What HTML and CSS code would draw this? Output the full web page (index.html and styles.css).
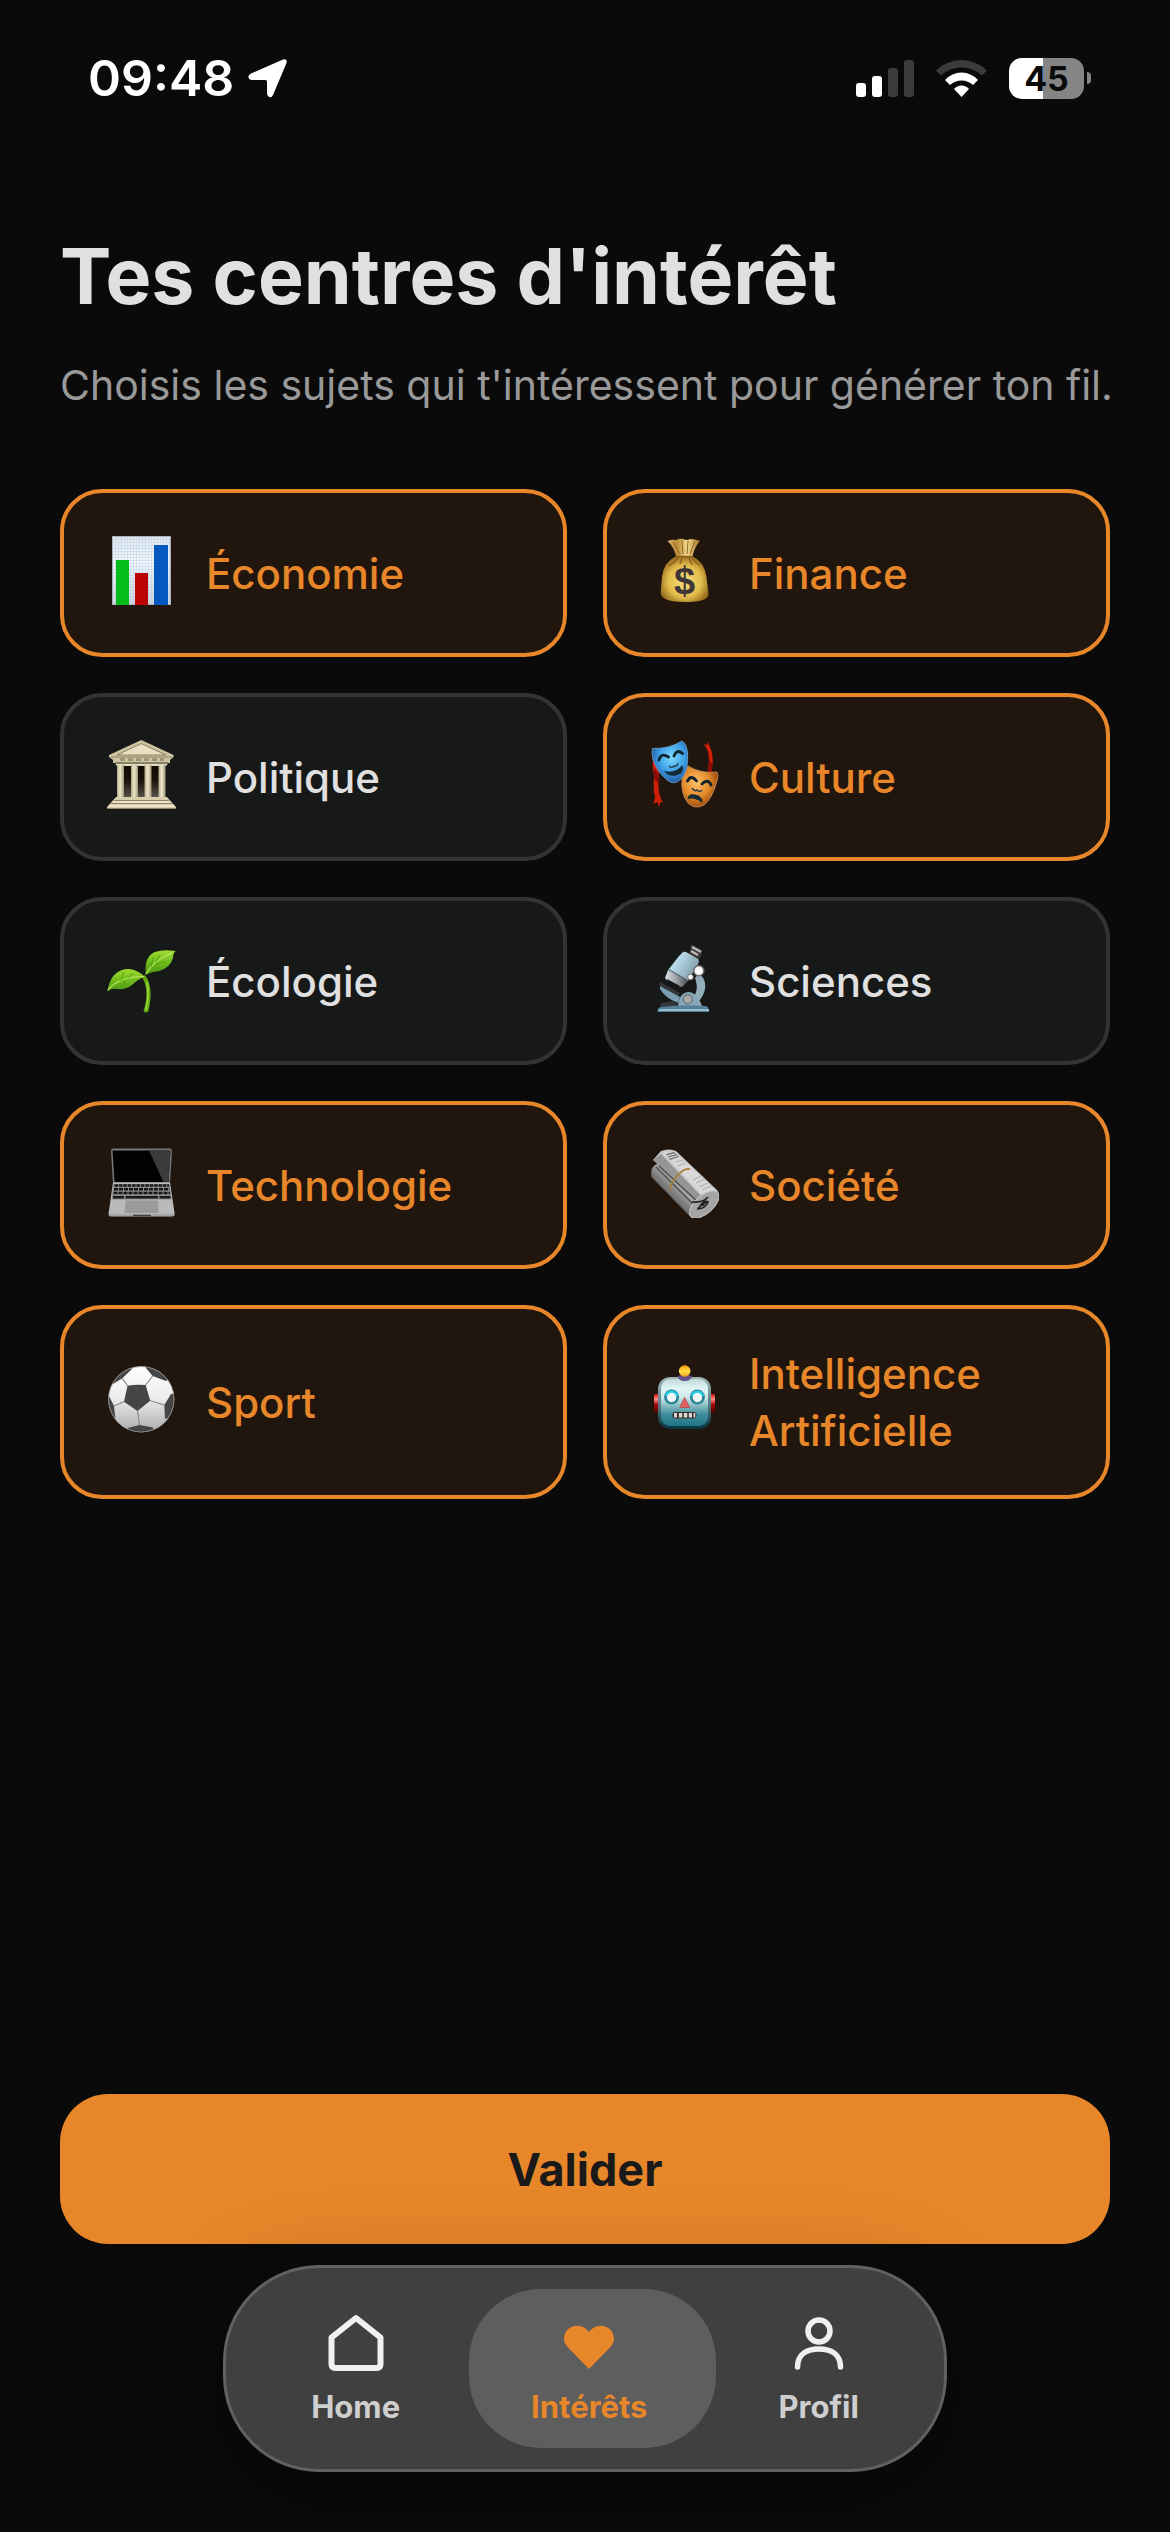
FILE: index.html
```html
<!DOCTYPE html>
<html lang="fr">
<head>
    <meta charset="UTF-8">
    <meta name="viewport" content="width=device-width, initial-scale=1.0">
    <title>Tes centres d'intérêt</title>
    <link rel="stylesheet" href="styles.css">
</head>
<body>
    <div class="status-bar">
        <div class="status-left">
            <span class="time">09:48</span>
            <svg class="location" viewBox="0 0 40 40" aria-hidden="true">
                <path d="M35 1.500Q39.500 0 38.500 5L25 37Q23 41 20 38Q19 37 19 35V23.500Q19 22 17.500 22H4Q0 21.500 .5 18Q1 16.500 3 15.500Z" fill="#fff"/>
            </svg>
        </div>
        <div class="status-right">
            <svg class="signal" viewBox="0 0 58 37" aria-hidden="true">
                <rect x="0" y="23" width="10" height="14" rx="3" fill="#fff"/>
                <rect x="16" y="16" width="10" height="21" rx="3" fill="#fff"/>
                <rect x="32" y="8" width="10" height="29" rx="3" fill="#3b3b3b"/>
                <rect x="48" y="0" width="10" height="37" rx="3" fill="#3b3b3b"/>
            </svg>
            <svg class="wifi" viewBox="0 0 51 37" aria-hidden="true">
                <path d="M0 10.500Q11 0 25.500 0T51 10.500L46 15.500Q37 7.500 25.500 7.500T5 15.500Z" fill="#3b3b3b"/>
                <path d="M9 20Q16 12.500 25.500 12.500T42 20L37 25Q32 20.500 25.500 20.500T14 25Z" fill="#fff"/>
                <path d="M18 29Q21 25.500 25.500 25.500T33 29L25.500 37Z" fill="#fff"/>
            </svg>
            <div class="battery">
                <span class="battery-level">45</span>
                <span class="battery-tip"></span>
            </div>
        </div>
    </div>

    <main class="content">
        <h1>Tes centres d'intérêt</h1>
        <p class="subtitle">Choisis les sujets qui t'intéressent pour générer ton fil.</p>

        <div class="grid">
            <button type="button" class="card selected" aria-pressed="true">
                <svg class="emoji" viewBox="0 0 70 70" aria-hidden="true">
                    <defs>
                        <pattern id="squares" width="3" height="3" patternUnits="userSpaceOnUse">
                            <path d="M3 0H0V3" fill="none" stroke="#a9cdec" stroke-width=".8"/>
                        </pattern>
                        <linearGradient id="paper" x1="0" y1="0" x2="0" y2="1">
                            <stop offset="0" stop-color="#e4e8ee"/><stop offset=".4" stop-color="#f6f7f9"/><stop offset="1" stop-color="#cfd3da"/>
                        </linearGradient>
                    </defs>
                    <rect x="6" width="59" height="69" fill="url(#paper)"/>
                    <rect x="6" width="59" height="69" fill="url(#squares)"/>
                    <rect x="6.500" y=".5" width="58" height="68" fill="none" stroke="#aab0b8"/>
                    <rect x="10" y="24" width="13" height="45" fill="#06bb1c"/>
                    <rect x="29" y="37" width="13" height="32" fill="#bb0505"/>
                    <rect x="48" y="9" width="14" height="60" fill="#0558bd"/>
                </svg>
                <span>Économie</span>
            </button>

            <button type="button" class="card selected" aria-pressed="true">
                <svg class="emoji" viewBox="0 0 70 70" aria-hidden="true">
                    <defs>
                        <radialGradient id="bag" cx=".5" cy=".55" r=".58">
                            <stop offset="0" stop-color="#f7df7c"/><stop offset=".6" stop-color="#e2bd4c"/><stop offset="1" stop-color="#8c6117"/>
                        </radialGradient>
                        <linearGradient id="neck" x1="0" y1="0" x2="1" y2="0">
                            <stop offset="0" stop-color="#d8b070"/><stop offset=".3" stop-color="#b98a35"/><stop offset=".6" stop-color="#f3dc8c"/><stop offset="1" stop-color="#a8722a"/>
                        </linearGradient>
                    </defs>
                    <path d="M18.500 5Q23 3 27 4Q31 2 34 3Q38 5 41 3Q46 3 51 5Q46 10 43.500 20H27Q25 11 18.500 5Z" fill="url(#neck)"/>
                    <path d="M27 20Q14 27 13 41L11.600 57Q12 66 36 66T59.500 58L57.500 41Q56 27 43.500 20Z" fill="url(#bag)"/>
                    <path d="M27 20.500H44M29 22Q25 27 20 30M33 22L31 28M40 22L43 29M43 22Q47 27 51 29" fill="none" stroke="#8a5f1c" stroke-width="1.300"/>
                    <path d="M24 6L31 18M33 4L34 18M39 5L38 18M46 5L41 18" fill="none" stroke="#8f6428" stroke-width="1"/>
                    <text class="dollar" x="35.500" y="58" text-anchor="middle">$</text>
                </svg>
                <span>Finance</span>
            </button>

            <button type="button" class="card" aria-pressed="false">
                <svg class="emoji" viewBox="0 0 70 70" aria-hidden="true">
                    <defs>
                        <linearGradient id="column" x1="0" y1="0" x2="1" y2="0">
                            <stop offset="0" stop-color="#b3a888"/><stop offset=".45" stop-color="#efe8ca"/><stop offset="1" stop-color="#a3977a"/>
                        </linearGradient>
                        <linearGradient id="inside" x1="0" y1="0" x2="0" y2="1">
                            <stop offset="0" stop-color="#0d0800"/><stop offset=".5" stop-color="#1c150b"/><stop offset="1" stop-color="#5a554d"/>
                        </linearGradient>
                    </defs>
                    <rect x="14" y="24" width="42" height="34" fill="url(#inside)"/>
                    <path d="M35.300 0L67.600 15V17L64 20V23H7V20L3 17V15Z" fill="#cfc4a1"/>
                    <path d="M35.300 3.500L60 15H11Z" fill="#e9e1c2" stroke="#8b8064"/>
                    <path d="M5 17H66M9 22.500H62" stroke="#8f8468"/>
                    <path d="M14 19.500H58" stroke="#a29573" stroke-width="3" stroke-dasharray="5 3"/>
                    <path d="M9 23.500H62L60 26H11Z" fill="#e6dec0"/>
                    <rect x="11" y="25" width="7" height="33" fill="url(#column)"/>
                    <rect x="25" y="25" width="7" height="33" fill="url(#column)"/>
                    <rect x="38.500" y="25" width="7" height="33" fill="url(#column)"/>
                    <rect x="52.500" y="25" width="7" height="33" fill="url(#column)"/>
                    <path d="M10 57H61L70 67V69H1V67Z" fill="#d8ceac"/>
                    <path d="M8 60.500H63M5 63.500H66M1 68.500H70" stroke="#8f8567"/>
                    <path d="M7 62H64M3 66H68" stroke="#f1ebd0" stroke-width="1.500"/>
                </svg>
                <span>Politique</span>
            </button>

            <button type="button" class="card selected" aria-pressed="true">
                <svg class="emoji" viewBox="0 0 70 70" aria-hidden="true">
                    <defs>
                        <radialGradient id="happy" cx=".55" cy=".4" r=".65">
                            <stop offset="0" stop-color="#7fdcff"/><stop offset=".55" stop-color="#3d9fe6"/><stop offset="1" stop-color="#204a94"/>
                        </radialGradient>
                        <radialGradient id="sad" cx=".4" cy=".4" r=".65">
                            <stop offset="0" stop-color="#ffc36a"/><stop offset=".55" stop-color="#e38a2b"/><stop offset="1" stop-color="#96420c"/>
                        </radialGradient>
                    </defs>
                    <path d="M4 20Q3 27 5 35Q4 50 6 57L4.500 64L8 62L10.500 67L11 62L14 63Q9 54 9.500 44L10 30Z" fill="#cf1f06"/>
                    <path d="M55 4L58 5L58 1.500Q65 12 63.500 24L62.500 33H58.500Q61 20 59 11Z" fill="#cf1f06"/>
                    <path d="M60 20Q59.500 27 59 33H62.500L63.500 24ZM5 28L9.500 34L9.300 44L5 38Z" fill="#8c0904"/>
                    <path d="M39 26Q52 34 68 32Q70 35 68 41Q63 59 55 65Q46 70 39 63Q31 53 33.300 37Q36 32 39 26Z" fill="url(#sad)" stroke="#c9955e" stroke-width=".8"/>
                    <path d="M3.500 8.500Q20 9 33 1Q37 3 38.500 12Q40 31 32 39Q25 46 18 40Q4 28 3 13Z" fill="url(#happy)" stroke="#6aa9d7" stroke-width=".8"/>
                    <g fill="none" stroke="#10242e" stroke-width="2.800" stroke-linecap="round">
                        <path d="M10 20Q12 12 19.500 17M25 16Q28 8.500 33.500 13.500M38.500 41Q42 34 47.500 41M53 44Q59 38 62 45"/>
                    </g>
                    <path d="M15 31Q26 34 33.500 25Q36 34 27 35.500Q19 37 15 31Z" fill="#142a35"/>
                    <path d="M20 26Q23 29 25 26Q28 27 29 23M43 48Q46 52 48 50Q51 53 53 50" fill="none" stroke="#2a3a45" stroke-width="1.400"/>
                    <path d="M38.500 59Q39 53 46 54.500Q54 56 53.500 63Q46 57 38.500 59Z" fill="#142a35"/>
                </svg>
                <span>Culture</span>
            </button>

            <button type="button" class="card" aria-pressed="false">
                <svg class="emoji" viewBox="0 0 70 70" aria-hidden="true">
                    <defs>
                        <linearGradient id="leaf" x1="0" y1="0" x2="0" y2="1">
                            <stop offset="0" stop-color="#a0dc32"/><stop offset=".5" stop-color="#6fbc1c"/><stop offset="1" stop-color="#4c9412"/>
                        </linearGradient>
                    </defs>
                    <path d="M36 33L39 31Q48 43 42.500 67Q40 70 37.500 67Q44 46 36 33Z" fill="#63a914"/>
                    <path d="M41 38Q43.500 52 40 66" fill="none" stroke="#9bd93a" stroke-width="1.500"/>
                    <path d="M39.700 31Q38 12 49 8Q57 5 69.700 7Q67 9 67 14Q64 24 53 27Q44 28 39.700 31Z" fill="url(#leaf)"/>
                    <path d="M1.200 47.700Q5 25 23 25Q32 26 38.700 32.700Q32 35 26 41Q20 46 11 45Q5 44 1.200 47.700Z" fill="url(#leaf)"/>
                    <path d="M40 30Q47 17 66 9M2 46Q12 33 38 32.500" fill="none" stroke="#c0e86a" stroke-width="1.200"/>
                    <path d="M45 23L47 13M50 18L54 11M49 20L60 18M15 37L18 28M22 34L28 29M18 36L20 42" stroke="#4d9a10" stroke-width=".8"/>
                </svg>
                <span>Écologie</span>
            </button>

            <button type="button" class="card" aria-pressed="false">
                <svg class="emoji" viewBox="0 0 70 70" aria-hidden="true">
                    <defs>
                        <linearGradient id="tube" x1="0" y1="0" x2="1" y2=".6">
                            <stop offset="0" stop-color="#5f8fa8"/><stop offset=".35" stop-color="#b6dbea"/><stop offset="1" stop-color="#8299a6"/>
                        </linearGradient>
                        <linearGradient id="steel" x1="0" y1="0" x2="1" y2="0">
                            <stop offset="0" stop-color="#dce3e6"/><stop offset=".5" stop-color="#9aa2a6"/><stop offset="1" stop-color="#4a4a4a"/>
                        </linearGradient>
                    </defs>
                    <path d="M50 29Q60 38 54 51Q51 58 44 60L42 55Q51 48 46 34Z" fill="#91adba"/>
                    <path d="M42 0L53 6L52 12L48 18L36 12L41 8Z" fill="#3a3a3c"/>
                    <path d="M43 3L52 8M42 7L49 11" stroke="#c4bab4" stroke-width="2.400"/>
                    <path d="M33 9Q35 7 38 8.500L49 15Q51 17 49 20L39 37L19 26L30 12Z" fill="url(#tube)"/>
                    <path d="M19 26L39 37L33 43Q22 42 16 34Z" fill="url(#steel)"/>
                    <path d="M19 25L39 36.500" stroke="#4b5f69"/>
                    <path d="M18 35L31 42L28 44L20 41Z" fill="#141516"/>
                    <path d="M11 38L31 49L29 52L10 41Z" fill="#333638"/>
                    <path d="M11 42L31 53L29 59Q16 54 11 45Z" fill="#799db0"/>
                    <path d="M12 59L24 57L29 61L18 64L11 63Z" fill="#34373a"/>
                    <path d="M29 62Q30 49 39 48Q48 48 53 62Z" fill="#87a7b8"/>
                    <circle cx="38.800" cy="55.300" r="4.500" fill="#aaa9a5" stroke="#53616a"/>
                    <path d="M12 63Q35 60 57 62Q60 63 60 68H8.500Q8 64 12 63Z" fill="#55809a"/>
                    <path d="M10 66H60" stroke="#acd0e0" stroke-width="1.500"/>
                    <circle cx="49.800" cy="26.700" r="5" fill="#fff" stroke="#6e6b69" stroke-width="1.500"/>
                    <circle cx="41.500" cy="33" r="2.800" fill="#fff" stroke="#6e6b69"/>
                </svg>
                <span>Sciences</span>
            </button>

            <button type="button" class="card selected" aria-pressed="true">
                <svg class="emoji" viewBox="0 0 70 70" aria-hidden="true">
                    <path d="M7 .5H64Q66 .5 66 3L64 35H7L5 3Q5 .5 7 .5Z" fill="#77787a"/>
                    <path d="M6.500 2.500H64.500L62.500 34H8.500Z" fill="#020202"/>
                    <path d="M43 2.500H64.500L62.500 34H57.500Z" fill="#3b3b3b"/>
                    <path d="M7 34.500H64L68.700 66Q68.500 68.500 66 68.500H5Q2.500 68.500 2.500 66Z" fill="#b9babc"/>
                    <path d="M7.500 36H63.500L65.500 51.500H5.500Z" fill="#8a8b8d"/>
                    <g stroke="#17181a" stroke-width="2.600">
                        <path d="M8.500 37.500H63" stroke-dasharray="3.500 .9"/>
                        <path d="M8 41.200H63.500" stroke-dasharray="4 1"/>
                        <path d="M7.500 45H64" stroke-dasharray="4 1"/>
                        <path d="M7 49.300H18M19.500 49.300H52M53.500 49.300H64.500"/>
                    </g>
                    <path d="M19.500 52.500H52L52.500 65H18.500Z" fill="#999a9c"/>
                    <path d="M3 67H68.500" stroke="#8d8e90"/>
                    <path d="M27 67.500H45" stroke="#414244" stroke-width="1.500"/>
                </svg>
                <span>Technologie</span>
            </button>

            <button type="button" class="card selected" aria-pressed="true">
                <svg class="emoji" viewBox="0 0 70 70" aria-hidden="true">
                    <defs>
                        <linearGradient id="roll" x1=".7" y1=".3" x2=".3" y2=".7">
                            <stop offset="0" stop-color="#dadada"/><stop offset=".55" stop-color="#a5a5a5"/><stop offset="1" stop-color="#606060"/>
                        </linearGradient>
                    </defs>
                    <path d="M6 17Q1 20 2.500 29L41 68.500L63 49L24 8Z" fill="url(#roll)"/>
                    <path d="M4 12L12 3Q20 0 27 3L69 43Q65 51 50 55L10 16Z" fill="#c9c9c9"/>
                    <path d="M4 12L12 6L53 49L48 54Z" fill="#969696"/>
                    <path d="M14 5Q21 1 28 6L66 42L52 46Z" fill="#d9d9d9"/>
                    <path d="M17 6L25 4L30 9L21 12Z" fill="#727272"/>
                    <path d="M18 8L26 6M20 10L28 8" stroke="#e7e7e7" stroke-width="1.200"/>
                    <path d="M26 14L34 12M29 18L37 15M44 32L52 28M47 35L56 31M50 39L59 35M53 42L62 38" stroke="#b1b1b1" stroke-width="1.200"/>
                    <path d="M7 19L45 57M10 18L50 55" stroke="#4f4f4f" stroke-width="1.500"/>
                    <path d="M7 26L41 64M5 28L38 62" stroke="#7d7d7d" stroke-width=".8"/>
                    <ellipse cx="55.300" cy="56.500" rx="18" ry="9" transform="rotate(-42 55.300 56.500)" fill="#a4a4a4" stroke="#c8c8c8"/>
                    <path d="M43 54Q54 55 59 49M49 61Q55 51 59 54Q56 61 48 61M53 58L57 54" fill="none" stroke="#202020" stroke-width="1.700"/>
                    <path d="M41 21.300Q36 19 28 28Q20 37 21 43" fill="none" stroke="#a78035" stroke-width="1.800"/>
                </svg>
                <span>Société</span>
            </button>

            <button type="button" class="card selected" aria-pressed="true">
                <svg class="emoji" viewBox="0 0 70 70" aria-hidden="true">
                    <defs>
                        <linearGradient id="ball" x1="0" y1="0" x2="0" y2="1">
                            <stop offset="0" stop-color="#fff"/><stop offset=".5" stop-color="#ebebeb"/><stop offset="1" stop-color="#ababab"/>
                        </linearGradient>
                        <clipPath id="ball-edge"><circle cx="35.300" cy="34.300" r="33"/></clipPath>
                    </defs>
                    <circle cx="35.300" cy="34.300" r="33" fill="url(#ball)"/>
                    <g clip-path="url(#ball-edge)">
                        <path d="M21.500 20.700Q30 19 39.700 20L44.200 35.700L31.500 46L18 36.700ZM40 0V3L46.600 11L60 16L66 12L50 -2ZM26 0V4L16.300 13.300L7 19L5 10ZM70 28L65 29L58.300 40L59 54L70 50ZM0 30L3 31L8 41L9.400 54L0 50ZM22 63L33.500 60L47 62.500L48 70H22Z" fill="#454545"/>
                        <path d="M21.500 20.700L16.300 13.300M39.700 20L46.600 11M44.200 35.700L58.300 40M31.500 46L33.500 60M18 36.700L8 41" stroke="#888" stroke-width="1.200"/>
                    </g>
                    <circle cx="35.300" cy="34.300" r="32.700" fill="none" stroke="#9c9c9c" stroke-width=".7"/>
                </svg>
                <span>Sport</span>
            </button>

            <button type="button" class="card selected" aria-pressed="true">
                <svg class="emoji" viewBox="0 0 70 70" aria-hidden="true">
                    <defs>
                        <linearGradient id="face" x1="0" y1="0" x2="0" y2="1">
                            <stop offset="0" stop-color="#c2d8d6"/><stop offset=".2" stop-color="#dff6f6"/><stop offset=".4" stop-color="#cbe7e8"/><stop offset=".75" stop-color="#3f8d9b"/><stop offset="1" stop-color="#1f7486"/>
                        </linearGradient>
                        <linearGradient id="shell" x1="0" y1="0" x2="0" y2="1">
                            <stop offset="0" stop-color="#9fb6b3"/><stop offset=".5" stop-color="#5c8087"/><stop offset="1" stop-color="#06333f"/>
                        </linearGradient>
                        <linearGradient id="ear" x1="0" y1="0" x2="0" y2="1">
                            <stop offset="0" stop-color="#e01212"/><stop offset=".3" stop-color="#ff8d84"/><stop offset=".6" stop-color="#a30303"/><stop offset="1" stop-color="#5c0000"/>
                        </linearGradient>
                        <linearGradient id="lamp" x1="0" y1="0" x2="0" y2="1">
                            <stop offset="0" stop-color="#f49b00"/><stop offset=".55" stop-color="#ffe14a"/><stop offset="1" stop-color="#f39a12"/>
                        </linearGradient>
                    </defs>
                    <rect x="5" y="29" width="6" height="18" rx="2" fill="url(#ear)"/>
                    <rect x="60" y="29" width="6" height="18" rx="2" fill="url(#ear)"/>
                    <rect x="9" y="12" width="53" height="52" rx="12" fill="url(#shell)"/>
                    <rect x="12" y="14" width="47" height="47" rx="9" fill="url(#face)"/>
                    <path d="M28.500 11Q36 8 43 11Q42 16 35.700 16T28.500 11Z" fill="#66508a"/>
                    <circle cx="35.700" cy="6" r="5.800" fill="url(#lamp)"/>
                    <circle cx="22.600" cy="32" r="7.500" fill="#2c8497"/>
                    <circle cx="48.400" cy="32" r="7.500" fill="#2c8497"/>
                    <path d="M17 31A5.800 5.800 0 0 1 28.200 31M42.800 31A5.800 5.800 0 0 1 54 31" fill="none" stroke="#1fd5ee" stroke-width="2"/>
                    <circle cx="22.600" cy="32.500" r="4.700" fill="#f2f8f8"/>
                    <circle cx="48.400" cy="32.500" r="4.700" fill="#f2f8f8"/>
                    <path d="M35.700 32.500L40.700 42.500H30.700Z" fill="#e2605f" stroke="#b04b50" stroke-width=".8"/>
                    <rect x="23.500" y="47" width="24" height="6.500" rx="3.200" fill="#34282b"/>
                    <path d="M25 50.200H28M29.800 50.200H33.300M34.800 50.200H38.300M39.800 50.200H43M44.500 50.200H46.300" stroke="#dcd8cd" stroke-width="4.500"/>
                </svg>
                <span>Intelligence Artificielle</span>
            </button>
        </div>

        <button type="submit" class="validate">Valider</button>
    </main>

    <nav class="tab-bar">
        <a class="tab" href="#home">
            <svg class="tab-icon" viewBox="0 0 60 60" aria-hidden="true">
                <path d="M5.500 24.500L30 5L54.500 24.500V51Q54.500 55 50.500 55H9.500Q5.500 55 5.500 51Z" fill="none" stroke="#f0f0f0" stroke-width="6" stroke-linejoin="round"/>
            </svg>
            <span>Home</span>
        </a>
        <a class="tab active" href="#interets" aria-current="page">
            <svg class="tab-icon" viewBox="0 0 60 60" aria-hidden="true">
                <path d="M30 56L9 34.500Q5 30 5 26C5 12 22 8 30 19C38 8 55 12 55 26Q55 30 51 34.500Z" fill="#e8862a"/>
            </svg>
            <span>Intérêts</span>
        </a>
        <a class="tab" href="#profil">
            <svg class="tab-icon" viewBox="0 0 60 60" aria-hidden="true">
                <circle cx="30" cy="18" r="11" fill="none" stroke="#f0f0f0" stroke-width="5.500"/>
                <path d="M8.500 54C8.500 41 18 36 30 36S51.500 41 51.500 54" fill="none" stroke="#f0f0f0" stroke-width="5.500" stroke-linecap="round"/>
            </svg>
            <span>Profil</span>
        </a>
    </nav>
</body>
</html>
```

FILE: styles.css
```css
* {
    box-sizing: border-box;
}
body {
    display: flex;
    flex-direction: column;
    min-height: 100vh;
    margin: 0;
    background-color: #0a0a0a;
    color: #e0e0e0;
    font-family: Inter, "Noto Sans", sans-serif;
}
button {
    font-family: inherit;
    cursor: pointer;
}

/* status bar */
.status-bar {
    display: flex;
    justify-content: space-between;
    align-items: center;
    height: 156px;
    padding: 0 79px 0 88px;
    color: #fff;
}
.status-left,
.status-right {
    display: flex;
    align-items: center;
}
.status-left {
    gap: 14px;
}
.status-right {
    gap: 22px;
}
.time {
    font-size: 50px;
    font-weight: 600;
}
.location {
    width: 40px;
    height: 40px;
}
.signal {
    width: 58px;
    height: 37px;
}
.wifi {
    width: 51px;
    height: 37px;
}
.battery {
    display: flex;
    align-items: center;
    gap: 3px;
}
.battery-level {
    width: 75px;
    border-radius: 13px;
    background: linear-gradient(to right, #fff 45%, #858585 45%);
    color: #0a0a0a;
    font-size: 34px;
    font-weight: 700;
    line-height: 41px;
    text-align: center;
}
.battery-tip {
    width: 4px;
    height: 12px;
    border-radius: 0 6px 6px 0;
    background-color: #858585;
}

/* interests */
.content {
    display: flex;
    flex: 1;
    flex-direction: column;
    padding: 72px 60px 21px;
}
h1 {
    margin: 0;
    font-size: 77px;
    font-weight: 700;
    line-height: 96px;
}
.subtitle {
    margin: 32px 0 75px;
    color: #999;
    font-size: 41px;
    line-height: 58px;
    white-space: nowrap;
}
.grid {
    display: grid;
    grid-template-columns: repeat(2, 1fr);
    gap: 36px;
}
.card {
    display: flex;
    align-items: center;
    gap: 30px;
    padding: 36px 42px;
    border: 4px solid #333;
    border-radius: 42px;
    background-color: #171918;
    color: #e0e0e0;
    font-size: 42px;
    font-weight: 500;
    line-height: 57px;
    text-align: left;
}
.card.selected {
    border-color: #e8862a;
    background-color: #21160e;
    color: #e8862a;
}
.emoji {
    flex: none;
    width: 70px;
    height: 70px;
    margin: 7px 0 11px;
}
.dollar {
    fill: #40363a;
    font-family: "Liberation Sans", sans-serif;
    font-size: 38px;
    font-weight: 700;
}
.validate {
    height: 150px;
    margin-top: auto;
    border: none;
    border-radius: 48px;
    background-color: #e8862a;
    color: #1a1a1a;
    font-size: 45px;
    font-weight: 700;
}

/* bottom navigation */
.tab-bar {
    display: flex;
    align-self: center;
    gap: 3px;
    margin-bottom: 60px;
    padding: 21px;
    border: 3px solid #616161;
    border-radius: 96px;
    background-color: #404040;
    box-shadow: 0 24px 96px rgba(0, 0, 0, 0.3);
}
.tab {
    position: relative;
    display: flex;
    flex-direction: column;
    align-items: center;
    gap: 14px;
    padding: 24px 64px 21px;
    color: #cfcfcf;
    font-size: 31px;
    font-weight: 700;
    line-height: 40px;
    text-decoration: none;
}
.tab.active {
    color: #e8862a;
}
/* highlight behind the current tab */
.tab.active::before {
    content: "";
    position: absolute;
    inset: 0 -5px 0 2px;
    border-radius: 72px;
    background-color: #5e5e5e;
}
.tab-icon,
.tab span {
    position: relative;
}
.tab-icon {
    width: 60px;
    height: 60px;
}
```
